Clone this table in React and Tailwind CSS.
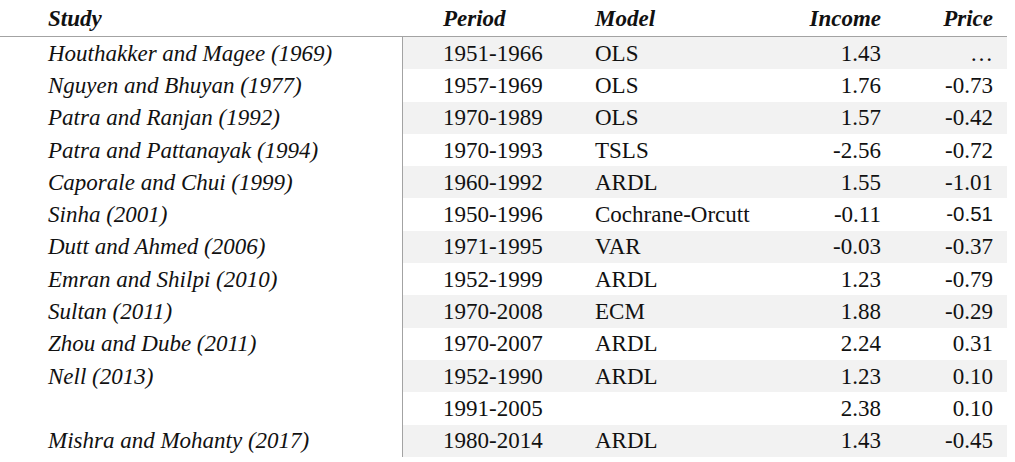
import React from "react";

const rows = [
  ["Houthakker and Magee (1969)", "1951-1966", "OLS", "1.43", "…"],
  ["Nguyen and Bhuyan (1977)", "1957-1969", "OLS", "1.76", "-0.73"],
  ["Patra and Ranjan (1992)", "1970-1989", "OLS", "1.57", "-0.42"],
  ["Patra and Pattanayak (1994)", "1970-1993", "TSLS", "-2.56", "-0.72"],
  ["Caporale and Chui (1999)", "1960-1992", "ARDL", "1.55", "-1.01"],
  ["Sinha (2001)", "1950-1996", "Cochrane-Orcutt", "-0.11", "-0.51"],
  ["Dutt and Ahmed (2006)", "1971-1995", "VAR", "-0.03", "-0.37"],
  ["Emran and Shilpi (2010)", "1952-1999", "ARDL", "1.23", "-0.79"],
  ["Sultan (2011)", "1970-2008", "ECM", "1.88", "-0.29"],
  ["Zhou and Dube (2011)", "1970-2007", "ARDL", "2.24", "0.31"],
  ["Nell (2013)", "1952-1990", "ARDL", "1.23", "0.10"],
  ["", "1991-2005", "", "2.38", "0.10"],
  ["Mishra and Mohanty (2017)", "1980-2014", "ARDL", "1.43", "-0.45"],
];

export default function App() {
  return (
    <div className="w-[1015px] h-[462px] bg-white text-[#111] font-['Liberation_Serif','Times_New_Roman',serif] text-[23px] leading-none overflow-hidden">
      <div className="w-[1007px]">
        <div className="flex items-center h-[37px] border-b border-[#a3a3a3] font-bold italic">
          <div className="w-[403px] pl-[48px]">Study</div>
          <div className="flex-1 flex">
            <div className="w-[192px] pl-[40px]">Period</div>
            <div className="w-[180px]">Model</div>
            <div className="w-[106px] text-right">Income</div>
            <div className="w-[112px] text-right">Price</div>
          </div>
        </div>
        {rows.map((r, i) => (
          <div key={i} className="flex h-[32.3px]">
            <div className="w-[403px] pl-[48px] border-r border-[#a3a3a3] italic flex items-center">
              {r[0]}
            </div>
            <div className={i % 2 === 0 ? "flex-1 flex items-center bg-[#f2f2f2]" : "flex-1 flex items-center bg-white"}>
              <div className="w-[192px] pl-[40px]">{r[1]}</div>
              <div className="w-[180px]">{r[2]}</div>
              <div className="w-[106px] text-right">{r[3]}</div>
              <div className={r[4] === "-0.51" ? "w-[112px] text-right font-['Liberation_Sans','Arial',sans-serif] text-[20.5px]" : "w-[112px] text-right"}>
                {r[4]}
              </div>
            </div>
          </div>
        ))}
      </div>
    </div>
  );
}
